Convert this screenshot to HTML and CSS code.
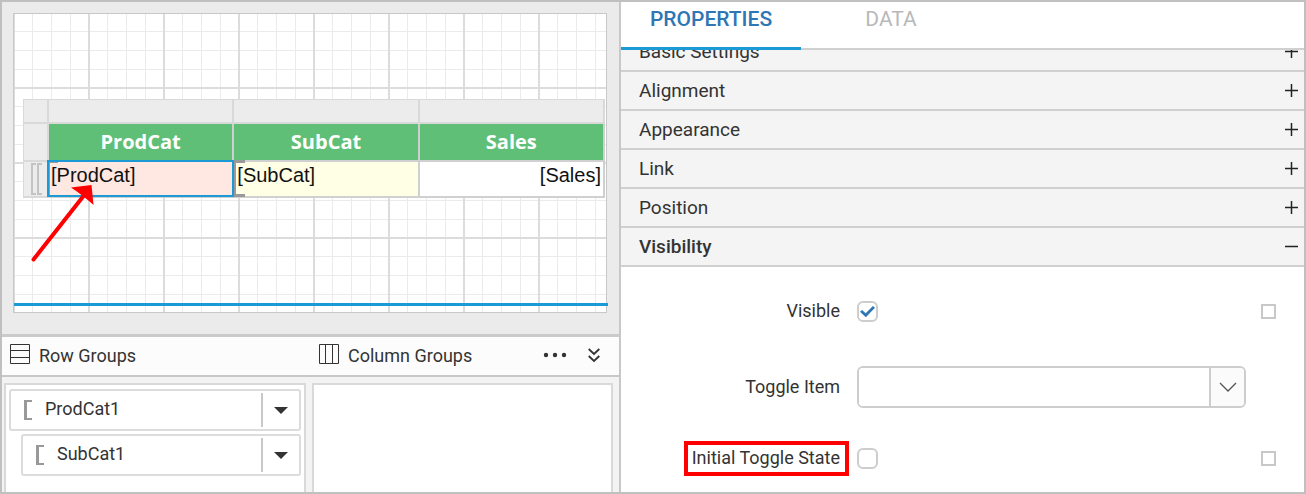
FILE: index.html
```html
<!DOCTYPE html>
<html lang="en">
<head>
<meta charset="utf-8">
<title>Report Designer</title>
<link rel="stylesheet" href="styles.css">
</head>
<body>
<div class="designer">
  <main class="workspace">
    <section class="canvas">
      <div class="page">
        <table class="tablix">
          <colgroup><col class="handle-col"><col><col><col></colgroup>
          <tbody>
            <tr class="handles"><td></td><td></td><td></td><td></td></tr>
            <tr class="heads"><td class="handle"></td><th scope="col">ProdCat</th><th scope="col">SubCat</th><th scope="col">Sales</th></tr>
            <tr class="values">
              <td class="handle"><span class="marks"><i class="bracket"></i><i class="bracket"></i></span></td>
              <td class="selected">[ProdCat]</td>
              <td class="grouped">[SubCat]</td>
              <td class="number">[Sales]</td>
            </tr>
          </tbody>
        </table>
        <svg class="arrow" width="66" height="82" viewBox="0 0 66 82" aria-hidden="true"><path d="M3.500 79.500 53.500 16" stroke="#f00" stroke-width="4" stroke-linecap="round"/><path d="M41 7.500 61.500 5 63.500 25Q58 20 54 17 48 12 41 7.500z" fill="#f00"/></svg>
      </div>
    </section>
    <header class="groups-bar">
      <h2 class="group-title">
        <svg width="20" height="20" viewBox="0 0 20 20" aria-hidden="true"><path d="M.5.500h19v19H.5zM.5 6.500h19M.5 13.500h19" fill="none" stroke="#333"/></svg>Row Groups</h2>
      <h2 class="group-title">
        <svg width="20" height="20" viewBox="0 0 20 20" aria-hidden="true"><path d="M.5.500h19v19H.5zM6.500.500v19M13.500.500v19" fill="none" stroke="#333"/></svg>Column Groups
      </h2>
      <div class="tools">
        <button type="button" aria-label="More options"><svg width="24" height="6" viewBox="0 0 24 6"><g fill="#333"><circle cx="3" cy="3" r="2.200"/><circle cx="12" cy="3" r="2.200"/><circle cx="21" cy="3" r="2.200"/></g></svg></button>
        <button type="button" aria-label="Collapse groups"><svg width="12" height="16" viewBox="0 0 12 16"><path d="M.7 2 6 7l5.300-5M.7 9 6 14l5.300-5" fill="none" stroke="#333" stroke-width="1.800"/></svg></button>
      </div>
    </header>
    <div class="groups">
      <div class="group-list">
        <div class="group-item"><i class="bracket"></i><span class="group-name">ProdCat1</span><button type="button" aria-label="ProdCat1 menu"><svg width="14" height="7" viewBox="0 0 14 7"><path d="M0 0h14L7 7z" fill="#333"/></svg></button></div>
        <div class="group-item nested"><i class="bracket"></i><span class="group-name">SubCat1</span><button type="button" aria-label="SubCat1 menu"><svg width="14" height="7" viewBox="0 0 14 7"><path d="M0 0h14L7 7z" fill="#333"/></svg></button></div>
      </div>
      <div class="group-list"></div>
    </div>
  </main>
  <aside class="panel">
    <nav class="tabs">
      <button type="button" class="tab active">PROPERTIES</button>
      <button type="button" class="tab">DATA</button>
    </nav>
    <div class="sections">
      <button type="button" class="section scrolled">Basic Settings<svg width="13" height="13" viewBox="0 0 13 13"><path d="M0 6.500h13M6.500 0v13"/></svg></button>
      <button type="button" class="section">Alignment<svg width="13" height="13" viewBox="0 0 13 13"><path d="M0 6.500h13M6.500 0v13"/></svg></button>
      <button type="button" class="section">Appearance<svg width="13" height="13" viewBox="0 0 13 13"><path d="M0 6.500h13M6.500 0v13"/></svg></button>
      <button type="button" class="section">Link<svg width="13" height="13" viewBox="0 0 13 13"><path d="M0 6.500h13M6.500 0v13"/></svg></button>
      <button type="button" class="section">Position<svg width="13" height="13" viewBox="0 0 13 13"><path d="M0 6.500h13M6.500 0v13"/></svg></button>
      <button type="button" class="section open">Visibility<svg width="13" height="13" viewBox="0 0 13 13"><path d="M0 6.500h13"/></svg></button>
    </div>
    <form class="fields">
      <label for="visible">Visible</label>
      <input type="checkbox" id="visible" class="check" checked>
      <button type="button" class="reset" aria-label="Visible advanced"></button>
      <label for="toggle-item">Toggle Item</label>
      <div class="combo">
        <input type="text" id="toggle-item">
        <button type="button" aria-label="Show items"><svg width="18" height="10" viewBox="0 0 18 10"><path d="M1 1l8 8 8-8" fill="none" stroke="#555" stroke-width="1.300"/></svg></button>
      </div>
      <span></span>
      <label for="initial-state" class="marked">Initial Toggle State</label>
      <input type="checkbox" id="initial-state" class="check">
      <button type="button" class="reset" aria-label="Initial Toggle State advanced"></button>
    </form>
  </aside>
</div>
</body>
</html>
```
FILE: styles.css
```css
* { box-sizing: border-box; }
body { margin: 0; font-family: Roboto, sans-serif; font-size: 18px; color: #333; }
button { margin: 0; padding: 0; border: 0; background: none; font: inherit; color: inherit; }
svg { display: block; flex: none; }

.designer {
  display: grid;
  grid-template-columns: minmax(0, 619fr) minmax(0, 683fr);
  height: 100vh;
  border: 2px solid #c0c0c0;
  overflow: hidden;
}

/* Design surface */
.workspace { display: flex; flex-direction: column; min-height: 0; border-right: 2px solid #c8c8c8; }
.canvas { padding: 11px 12px 21px 11px; background: #ebebeb; border-bottom: 3px solid #cbcbcb; }
.page {
  position: relative;
  height: 300px;
  padding: 85px 1px 0 9px;
  border: 1px solid #c8c8c8;
  background-color: #fff;
  background-image:
    linear-gradient(90deg, transparent 73px, #dcdcdc 73px),
    linear-gradient(transparent 73px, #dcdcdc 73px),
    linear-gradient(90deg, transparent 17px, #ebebeb 17px 18px, transparent 18px 36px, #ebebeb 36px 37px, transparent 37px 55px, #ebebeb 55px 56px, transparent 56px),
    linear-gradient(transparent 17px, #ebebeb 17px 18px, transparent 18px 36px, #ebebeb 36px 37px, transparent 37px 55px, #ebebeb 55px 56px, transparent 56px);
  background-size: 75px 75px;
  background-position: 1px 0;
}
.page::after { content: ""; position: absolute; left: 0; right: -2px; bottom: 6px; height: 3px; background: #1b9ad6; }
.arrow { position: absolute; left: 16px; top: 166px; }

.tablix {
  width: 100%;
  table-layout: fixed;
  border-collapse: separate;
  border-spacing: 0;
  border: 1px solid #d9d9d9;
  border-right: 0;
  border-bottom: 0;
  background: #fff;
}
.handle-col { width: 25px; }
.tablix td, .tablix th { padding: 0; border: solid #d0d0d0; border-width: 0 2px 2px 0; }
.tablix .handles td, .tablix .handle { background: #ececec; border-color: #d9d9d9; }
.handles td { height: 24px; }
.heads th { height: 38px; background: #5fbf77; color: #fff; font: bold 20px/28px "Open Sans", sans-serif; }
.tablix .values td { position: relative; height: 36px; padding: 0 2px; vertical-align: top; font: 20px/26px "Liberation Sans", sans-serif; color: #111; }
.tablix .values .handle { vertical-align: middle; padding-left: 7px; }
.marks { display: flex; gap: 1px; }
.marks .bracket { width: 5px; height: 32px; border-color: #c3c3c3; }
.tablix .values .selected { background: #ffe8e2; }
.tablix .values .grouped { background: #ffffe6; padding-left: 3px; }
.tablix .values .number { text-align: right; }
.selected::before { content: ""; position: absolute; left: 0; top: 0; bottom: 0; width: 8px; border: 1px solid #999; border-right: 0; }
.selected::after { content: ""; position: absolute; inset: -2px -2px -1px; border: 2px solid #1b9ad6; }
.grouped::before { content: ""; position: absolute; left: 0; top: -2px; bottom: -1px; width: 9px; border: solid #999; border-width: 3px 0 3px 2px; }

.bracket { display: block; flex: none; border: 2px solid #999; border-right: 0; }

/* Row and column groups */
.groups-bar {
  display: grid;
  grid-template-columns: 1fr 1fr;
  align-items: center;
  height: 40px;
  padding: 0 0 0 8px;
  background: #fcfcfc;
  border-bottom: 2px solid #c8c8c8;
}
.groups-bar { grid-template-columns: minmax(0, 309fr) minmax(0, 224fr) minmax(0, 76fr); }
.group-title { display: flex; align-items: center; gap: 9px; margin: 0; font-size: 18px; font-weight: 400; line-height: 36px; }
.group-title svg { margin-bottom: 4px; }
.tools { display: flex; align-items: center; gap: 21px; padding-bottom: 3px; }
.tools button { display: flex; align-items: center; }
.groups { display: grid; grid-template-columns: 1fr 1fr; gap: 6px; flex: 1; min-height: 0; padding: 6px 6px 0 2px; background: #f3f3f3; }
.group-list { display: flex; flex-direction: column; gap: 3px; padding: 4px 3px; border: 2px solid #d9d9d9; border-bottom: 0; background: #fff; }
.group-item { display: flex; align-items: stretch; flex: none; height: 42px; padding: 2px 0 2px 13px; border: 2px solid #dcdcdc; border-radius: 3px; }
.group-item.nested { margin-left: 12px; }
.group-item .bracket { align-self: center; width: 8px; height: 20px; border-width: 2px 0 2px 3px; }
.group-name { flex: 1; padding-left: 13px; line-height: 32px; }
.group-item button { display: flex; align-items: center; justify-content: center; width: 38px; border-left: 2px solid #c8c8c8; }

/* Properties panel */
.panel { display: flex; flex-direction: column; min-width: 0; min-height: 0; background: #fff; }
.tabs { position: relative; z-index: 1; display: flex; flex: none; height: 48px; background: #fff; box-shadow: inset 0 -2px #d0d0d0; }
.tab { width: 180px; padding-bottom: 12px; border-bottom: 3px solid transparent; font-size: 21px; color: #b8b8b8; }
.tab.active { font-weight: 500; color: #2f76b5; border-color: #1b9ad6; }
.sections { flex: none; }
.section {
  display: flex;
  align-items: center;
  justify-content: space-between;
  width: 100%;
  height: 39px;
  padding: 0 6px 0 18px;
  background: #f4f4f4;
  border-bottom: 2px solid #d0d0d0;
  font-size: 19px;
  text-align: left;
}
.section.scrolled { margin-top: -17px; }
.section.open { font-weight: 500; }
.section svg { fill: none; stroke: #222; stroke-width: 1.5; }

.fields {
  display: grid;
  grid-template-columns: 221px minmax(0, 1fr) 15px;
  grid-template-rows: 43px 42px 35px;
  gap: 33px 15px;
  align-items: center;
  padding: 23px 28px 0 0;
}
.fields label { justify-self: end; padding: 0 2px 2px 0; }
.fields .marked { height: 35px; margin-right: -7px; padding: 0 5px 0 4px; border: 4px solid #f00; line-height: 25px; }
.check { appearance: none; display: grid; place-items: center; width: 21px; height: 21px; margin: 0; border: 2px solid #cdcdcd; border-radius: 6px; background: #fff; }
.check:checked::before { content: ""; width: 15px; height: 12px; background: #2f76b5; clip-path: polygon(0 52%, 14% 38%, 38% 64%, 86% 4%, 100% 18%, 39% 98%); }
.reset { width: 15px; height: 15px; border: 2px solid #c8c8c8; background: #fff; }
.combo { display: flex; height: 42px; border: 2px solid #cdcdcd; border-radius: 6px; overflow: hidden; }
.combo input { flex: 1; min-width: 0; padding: 0 8px; border: 0; outline: 0; font: inherit; background: #fff; }
.combo button { display: flex; align-items: center; justify-content: center; width: 35px; border-left: 2px solid #cdcdcd; background: #fbfbfb; }
```
